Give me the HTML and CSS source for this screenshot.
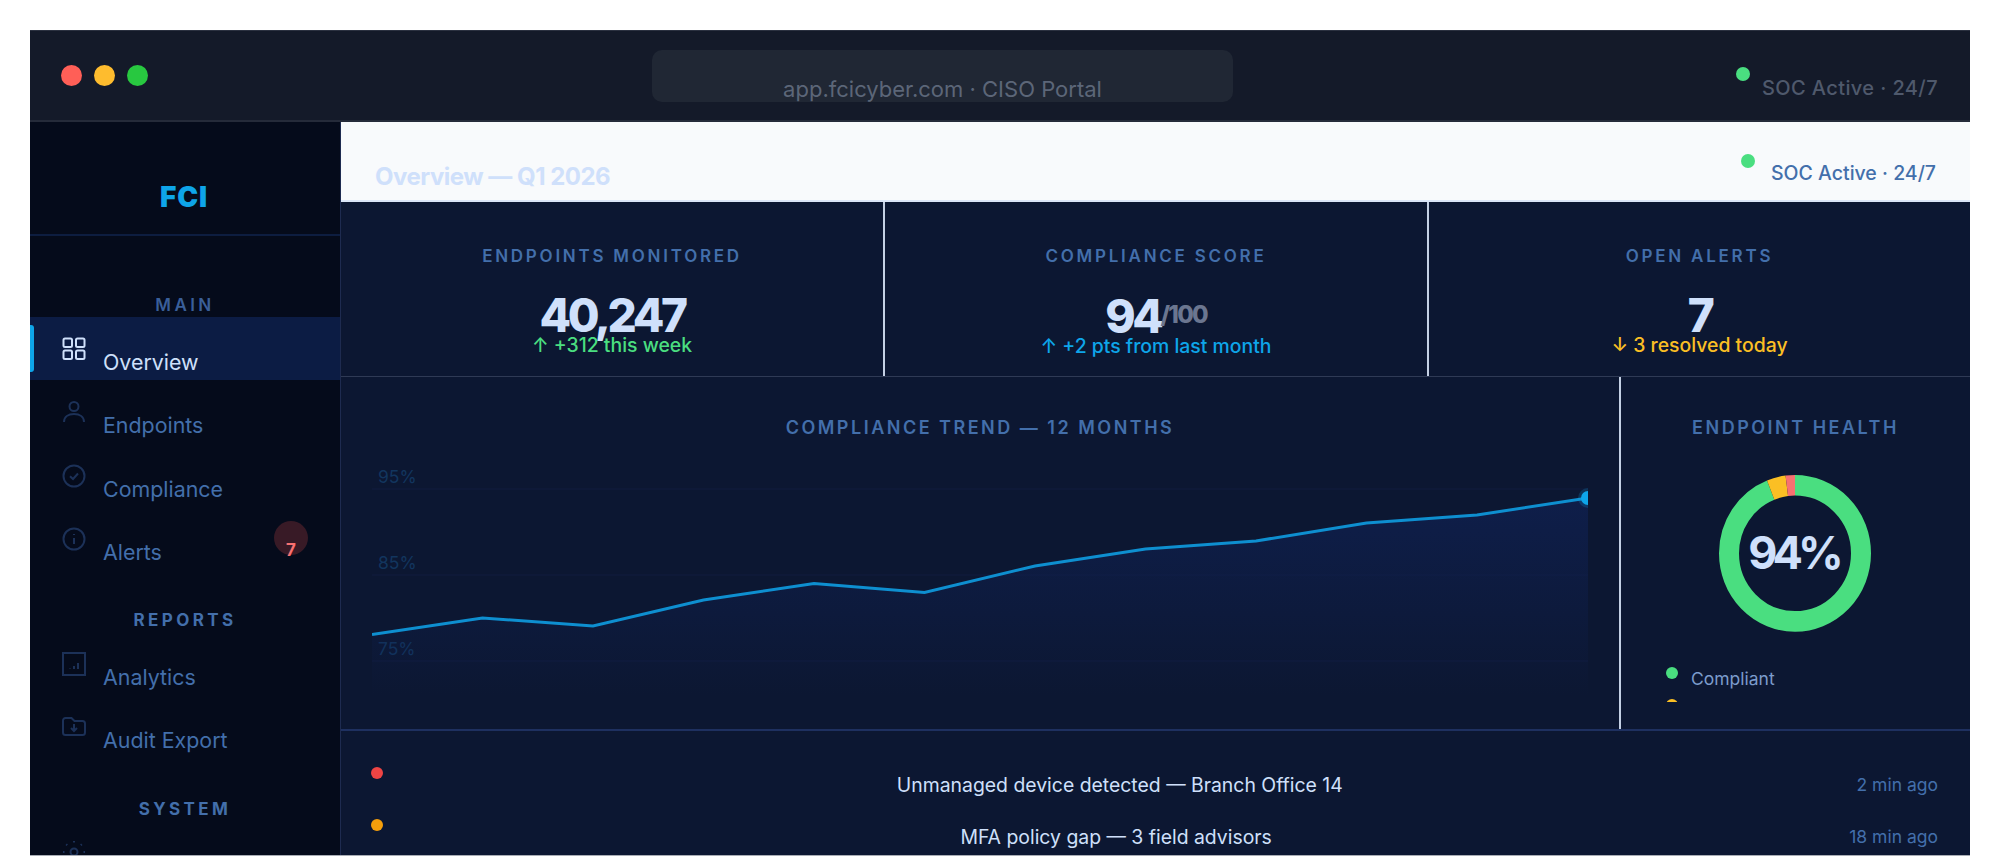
FILE: index.html
```html
<!DOCTYPE html>
<html lang="en">
<head>
<meta charset="utf-8">
<title>FCI CISO Portal</title>
<link rel="stylesheet" href="styles.css">
</head>
<body>
<div class="window">
  <header class="titlebar">
    <div class="lights"><span class="light red"></span><span class="light amber"></span><span class="light green"></span></div>
    <div class="urlbar"><span>app.fcicyber.com · CISO Portal</span></div>
    <div class="soc soc-top"><span class="soc-dot"></span><span>SOC Active · 24/7</span></div>
  </header>
  <div class="body">
    <aside class="sidebar">
      <div class="logo">FCI</div>
      <nav class="nav">
        <div class="nav-label first">MAIN</div>
        <a class="nav-item active">
          <svg class="nav-icon" viewBox="0 0 24 24"><rect x="1.5" y="1.5" width="8.5" height="8.5" rx="1.5"/><rect x="14" y="1.5" width="8.5" height="8.5" rx="1.5"/><rect x="1.5" y="13.5" width="8.5" height="8.5" rx="1.5"/><rect x="14" y="13.5" width="8.5" height="8.5" rx="1.5"/></svg>
          <span>Overview</span>
        </a>
        <a class="nav-item">
          <svg class="nav-icon" viewBox="0 0 24 24"><circle cx="12" cy="6.5" r="4.5"/><path d="M2 22c0-5.5 4.500-8 10-8s10 2.500 10 8"/></svg>
          <span>Endpoints</span>
        </a>
        <a class="nav-item">
          <svg class="nav-icon" viewBox="0 0 24 24"><circle cx="12" cy="12" r="10.500"/><path d="M8 12.300l3 2.700 5-5.500"/></svg>
          <span>Compliance</span>
        </a>
        <a class="nav-item">
          <svg class="nav-icon" viewBox="0 0 24 24"><circle cx="12" cy="12" r="10.500"/><path d="M12 11v6M12 7v1"/></svg>
          <span>Alerts</span>
          <b class="badge">7</b>
        </a>
        <div class="nav-label">REPORTS</div>
        <a class="nav-item">
          <svg class="nav-icon" viewBox="0 0 24 24"><rect x="1" y="1" width="22" height="22"/><path d="M8 16.500v.5M12 14v3M16 11v6"/></svg>
          <span>Analytics</span>
        </a>
        <a class="nav-item">
          <svg class="nav-icon" viewBox="0 0 24 24"><path d="M1 5.500a2.500 2.500 0 0 1 2.500-2.500h6l3 3h8a2.500 2.500 0 0 1 2.500 2.500v9a2.500 2.500 0 0 1-2.500 2.500h-17a2.500 2.500 0 0 1-2.500-2.500z"/><path d="M12 9v7M9 13l3 3 3-3"/></svg>
          <span>Audit Export</span>
        </a>
        <div class="nav-label">SYSTEM</div>
        <a class="nav-item">
          <svg class="nav-icon" viewBox="0 0 24 24"><circle cx="12" cy="12" r="3.500"/><path d="M12 1v1.500M12 21.500V23M1 12h1.500M21.500 12H23M4.200 4.200l1 1M18.800 18.800l1 1M4.200 19.800l1-1M18.800 5.200l1-1"/></svg>
        </a>
      </nav>
    </aside>
    <main class="main">
      <div class="page-head">
        <h1 class="page-title">Overview — Q1 2026</h1>
        <div class="soc soc-head"><span class="soc-dot"></span><span>SOC Active · 24/7</span></div>
      </div>
      <section class="kpis">
        <div class="kpi">
          <div class="kpi-label">ENDPOINTS MONITORED</div>
          <div class="kpi-value">40,247</div>
          <div class="kpi-sub up">↑ +312 this week</div>
        </div>
        <div class="kpi">
          <div class="kpi-label">COMPLIANCE SCORE</div>
          <div class="kpi-value">94<small>/100</small></div>
          <div class="kpi-sub info">↑ +2 pts from last month</div>
        </div>
        <div class="kpi">
          <div class="kpi-label">OPEN ALERTS</div>
          <div class="kpi-value">7</div>
          <div class="kpi-sub warn">↓ 3 resolved today</div>
        </div>
      </section>
      <section class="charts">
        <div class="trend">
          <div class="panel-title">COMPLIANCE TREND — 12 MONTHS</div>
          <svg class="trend-svg" viewBox="0 -12 1216 252">
            <defs>
              <linearGradient id="area" x1="0" y1="0" x2="0" y2="1">
                <stop offset="0" stop-color="#0f2050" stop-opacity=".8"/>
                <stop offset="1" stop-color="#0f2050" stop-opacity="0"/>
              </linearGradient>
            </defs>
            <path class="grid" d="M0 18H1216M0 104H1216M0 190H1216"/>
            <text class="axis" x="6" y="12">95%</text>
            <text class="axis" x="6" y="98">85%</text>
            <text class="axis" x="6" y="184">75%</text>
            <path fill="url(#area)" d="M0 163.500L110.500 147 221 155 331.500 129 442 112.500 552.500 121.500 663 95 773.500 78 884 70 994.500 52 1105 44 1216 27V225H0Z"/>
            <path class="line" d="M0 163.500L110.500 147 221 155 331.500 129 442 112.500 552.500 121.500 663 95 773.500 78 884 70 994.500 52 1105 44 1216 27"/>
            <circle class="glow" cx="1216" cy="27" r="10"/>
            <circle class="end" cx="1216" cy="27" r="7"/>
          </svg>
        </div>
        <div class="health">
          <div class="panel-title">ENDPOINT HEALTH</div>
          <div class="health-clip">
            <div class="donut">
              <svg viewBox="0 0 152 152" preserveAspectRatio="none">
                <circle class="seg" cx="76" cy="76" r="66" stroke="#4ade80" pathLength="100" stroke-dasharray="94 100" transform="rotate(-90 76 76)"/>
                <circle class="seg" cx="76" cy="76" r="66" stroke="#fbbf24" pathLength="100" stroke-dasharray="4 100" stroke-dashoffset="-94" transform="rotate(-90 76 76)"/>
                <circle class="seg" cx="76" cy="76" r="66" stroke="#f87171" pathLength="100" stroke-dasharray="2 100" stroke-dashoffset="-98" transform="rotate(-90 76 76)"/>
              </svg>
              <div class="donut-label">94%</div>
            </div>
            <div class="legend">
              <div class="legend-row"><span class="legend-dot compliant"></span><span>Compliant</span></div>
              <div class="legend-row"><span class="legend-dot pending"></span></div>
            </div>
          </div>
        </div>
      </section>
      <section class="activity">
        <div class="event"><span class="event-dot critical"></span><span class="event-text">Unmanaged device detected — Branch Office 14</span><span class="event-time">2 min ago</span></div>
        <div class="event"><span class="event-dot medium"></span><span class="event-text">MFA policy gap — 3 field advisors</span><span class="event-time">18 min ago</span></div>
      </section>
    </main>
  </div>
</div>
</body>
</html>
```
FILE: styles.css
```css
* { box-sizing: border-box; }
html, body { height: 100%; }
body {
  margin: 0;
  padding: 30px 30px 0;
  background: #fff;
  font-family: Inter, "Liberation Sans", sans-serif;
  overflow: hidden;
}
.window {
  height: 826px;
  display: flex;
  flex-direction: column;
  overflow: hidden;
  background: #0c1732;
  border-bottom: 1px solid #a9adb5;
}
.titlebar {
  flex: none;
  height: 92px;
  display: flex;
  align-items: center;
  padding: 0 32px 0 31px;
  background: #141a29;
  border-top: 1px solid #2b3140;
  border-bottom: 2px solid #252b3a;
}
.lights { display: flex; gap: 12px; }
.light { width: 21px; height: 21px; border-radius: 50%; }
.red { background: #ff5f57; }
.amber { background: #febc2e; }
.green { background: #28c840; }
.urlbar {
  width: 581px;
  height: 52px;
  display: flex;
  align-items: flex-end;
  justify-content: center;
  padding-bottom: 1px;
  background: #202734;
  border-radius: 10px;
  color: #5c6678;
  font-size: 22px;
  line-height: 24px;
  margin-left: 504px;
}
.soc { display: flex; align-items: flex-start; }
.soc-dot { width: 14px; height: 14px; border-radius: 50%; background: #4ade80; flex: none; }
.soc-top { margin-left: auto; margin-top: 25px; color: #4f596c; font-size: 20px; font-weight: 500; letter-spacing: .4px; gap: 12px; line-height: 22px; }
.soc-top .soc-dot { margin-top: -10px; }
.soc-head { margin-bottom: 8.5px; color: #436fab; font-size: 19.500px; font-weight: 500; gap: 16px; line-height: 22px; }
.soc-head .soc-dot { margin-top: -8px; }
.body { flex: 1; display: flex; min-height: 0; }
.sidebar {
  flex: none;
  width: 311px;
  background: #050b1b;
  border-right: 1px solid #1e2b50;
  overflow: hidden;
}
.logo {
  height: 114px;
  padding: 58px 2px 0 0;
  text-align: center;
  color: #0ea5e9;
  font-size: 28px;
  line-height: 34px;
  font-weight: 900;
  letter-spacing: .8px;
  border-bottom: 2px solid #0d1d40;
}
.nav-label {
  height: 61.700px;
  padding-top: 40px;
  line-height: 20px;
  text-align: center;
  color: #436fab;
  font-size: 17px;
  font-weight: 700;
  letter-spacing: 3.400px;
}
.nav-label.first { height: 81px; padding-top: 59px; letter-spacing: 3.400px; color: #3a5f99; font-weight: 600; }
.nav-item {
  position: relative;
  height: 63.330px;
  display: flex;
  align-items: flex-start;
  padding: 0 0 0 32px;
  color: #436fab;
  font-size: 21.400px;
}
.nav-item span { margin-left: 17px; padding-top: 32px; line-height: 26px; }
.nav-icon {
  width: 24px;
  height: 24px;
  margin-top: 20px;
  fill: none;
  stroke: #1c3158;
  stroke-width: 2;
  flex: none;
}
.nav-item.active { background: #0c1c44; color: #cfe0fb; }
.nav-item.active .nav-icon { stroke: #cfe0fb; }
.nav-item.active::before {
  content: "";
  position: absolute;
  left: 0;
  top: 8px;
  width: 4px;
  height: 47px;
  background: #0ea5e9;
  border-radius: 0 3px 3px 0;
}
.badge {
  position: absolute;
  left: 244px;
  top: 14px;
  width: 34px;
  height: 34px;
  border-radius: 50%;
  background: #381a26;
  color: #f87171;
  font-size: 17px;
  line-height: 20px;
  padding-top: 19px;
  text-align: center;
  font-weight: 700;
}
.main { flex: 1; min-width: 0; display: flex; flex-direction: column; }
.page-head {
  flex: none;
  height: 80px;
  display: flex;
  align-items: flex-end;
  justify-content: space-between;
  padding: 0 34px 8px 34px;
  background: #f8fafc;
  border-bottom: 2px solid #dbe6f8;
}
.page-title { margin: 0; color: #cfe0fb; font-size: 24px; line-height: 30px; font-weight: 700; letter-spacing: -.5px; }
.kpis {
  flex: none;
  height: 175px;
  display: grid;
  grid-template-columns: 542px 544px 1fr;
  border-bottom: 1px solid #2f3a55;
}
.kpi { text-align: center; padding-top: 44px; border-left: 2px solid #c4d0e4; }
.kpi:first-child { border-left: 0; }
.kpi-label { color: #436fab; font-size: 17px; line-height: 20px; font-weight: 600; letter-spacing: 2.750px; }
.kpi-value { color: #cfe0fb; font-size: 46px; line-height: 46px; font-weight: 800; margin-top: 26px; letter-spacing: -3.400px; }
.kpi-value small { color: #6b7690; font-size: 24px; font-weight: 800; vertical-align: 10px; letter-spacing: -1.800px; }
.kpi-sub { font-size: 19.400px; line-height: 22px; font-weight: 500; margin-top: -4px; }
.up { color: #4ade80; }
.info { color: #0ea5e9; }
.warn { color: #fbbf24; }
.charts { flex: none; height: 354px; display: flex; border-bottom: 2px solid #1e3060; }
.trend { flex: 1; min-width: 0; padding: 40px 31px 0; }
.panel-title { text-align: center; color: #436fab; font-size: 18px; line-height: 22px; font-weight: 600; letter-spacing: 2.500px; }
.trend-svg { display: block; width: 1216px; height: 252px; margin-top: 20px; overflow: hidden; }
.grid { stroke: #101d3e; stroke-width: 1; fill: none; }
.axis { fill: #12355e; font-size: 17.500px; font-family: Inter, sans-serif; }
.line { fill: none; stroke: #0e8fd0; stroke-width: 3; }
.glow { fill: #0ea5e9; opacity: .2; }
.end { fill: #0ea5e9; }
.health { flex: none; width: 351px; border-left: 2px solid #c4d0e4; padding: 40px 0 0; }
.health-clip { height: 227px; overflow: hidden; margin-top: 36px; padding: 0 46px 0 45px; }
.donut { position: relative; width: 152px; height: 156.700px; margin: 0 auto; }
.donut svg { display: block; width: 152px; height: 156.700px; }
.seg { fill: none; stroke-width: 20; }
.donut-label {
  position: absolute;
  inset: 0;
  display: flex;
  align-items: center;
  justify-content: center;
  color: #cfe0fb;
  font-size: 45px;
  font-weight: 700;
  letter-spacing: -5px;
  padding: 0 3px 2px 0;
}
.legend { margin-top: 35.300px; }
.legend-row { display: flex; align-items: flex-start; gap: 13px; height: 32px; color: #7c9ccc; font-size: 17.500px; line-height: 22px; }
.legend-row span:last-child:not(.legend-dot) { padding-top: 1px; }
.legend-dot { width: 12px; height: 12px; border-radius: 50%; flex: none; }
.compliant { background: #4ade80; }
.pending { background: #fbbf24; }
.activity { flex: 1; min-height: 0; overflow: hidden; padding: 36px 32px 0 30px; }
.event { display: flex; align-items: flex-start; height: 52px; }
.event-dot { width: 12px; height: 12px; border-radius: 50%; flex: none; }
.critical { background: #ef4444; }
.medium { background: #f59e0b; }
.event-text { flex: 1; text-align: center; color: #cfe0fb; font-size: 19.400px; line-height: 24px; padding-top: 6px; }
.event-time { color: #436fab; font-size: 17.500px; line-height: 24px; padding-top: 6px; }
```
